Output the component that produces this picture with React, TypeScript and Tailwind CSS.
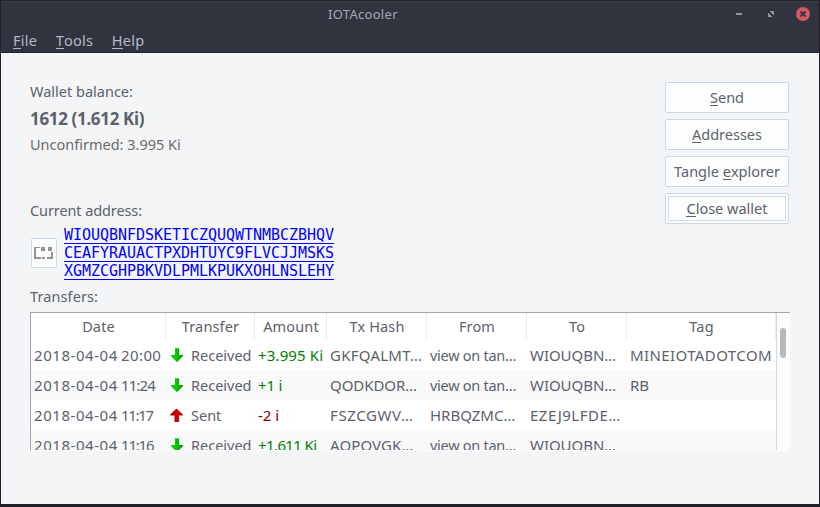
import React from "react";

const SANS = "font-['Noto_Sans',sans-serif]";

function Mnemonic({ before = "", letter, after }: { before?: string; letter: string; after: string }) {
  return (
    <span className="flex whitespace-pre">
      {before}
      <span className="h-[17px] border-b border-current">{letter}</span>
      {after}
    </span>
  );
}

function TitleBar() {
  return (
    <div className="relative flex h-[26px] border-t border-[#3c404b] text-[13px] text-[#a3a8b6]">
      <span className="pl-[327px] tracking-[0.3px] leading-[24px]">IOTAcooler</span>
      <svg className="absolute right-[6px] top-[2px]" width="78" height="18" viewBox="0 0 78 18" shapeRendering="crispEdges">
        <rect x="1" y="9" width="6" height="2" fill="#9297a3" />
        <path d="M35 7h4v4h-1v-1h-1v-1h-1v-1h-1zM33 9h1v1h1v1h1v1h1v1h-4z" fill="#9297a3" />
        <circle cx="68" cy="10" r="7" fill="#d35860" shapeRendering="geometricPrecision" />
        <path d="M65.5 7.5l5 5m0-5l-5 5" stroke="#31343f" strokeWidth="1.8" shapeRendering="geometricPrecision" />
      </svg>
    </div>
  );
}

function MenuBar() {
  return (
    <div className="flex h-[26px] gap-[18.5px] border-b border-[#23222d] pl-3 pt-[5px] text-[14.5px] leading-[17px] tracking-[0.25px] text-[#b3b9c7]">
      <Mnemonic letter="F" after="ile" />
      <Mnemonic letter="T" after="ools" />
      <Mnemonic letter="H" after="elp" />
    </div>
  );
}

function Button({ children, focused = false }: { children: React.ReactNode; focused?: boolean }) {
  return (
    <button className="h-[31px] w-[124px] rounded-[2px] border border-[#cdd5e8] bg-[#fcfdfd] p-[2px] text-[14.5px] leading-[17px] tracking-normal">
      <span className={`flex h-full items-center justify-center border ${focused ? "border-[#d5d9ea]" : "border-transparent"}`}>
        {children}
      </span>
    </button>
  );
}

function Arrow({ up = false }: { up?: boolean }) {
  return (
    <svg className="ml-[4px] mr-[7px] shrink-0" width="14" height="16" viewBox="0 0 14 16">
      <defs>
        <linearGradient id="received" x1="0" x2="1"><stop offset="0" stopColor="#00e000" /><stop offset="0.5" stopColor="#00c400" /><stop offset="1" stopColor="#009800" /></linearGradient>
        <linearGradient id="sent" x1="0" x2="1"><stop offset="0" stopColor="#a00000" /><stop offset="0.6" stopColor="#d00000" /><stop offset="1" stopColor="#b00000" /></linearGradient>
      </defs>
      {up ? (
        <path d="M6.5 0.500l6.500 6.200-.5.8H9V14H4.500V7.500H.6L0 6.700z" fill="url(#sent)" />
      ) : (
        <path d="M5 0.300h4v6.700h3.800l.5.700L7 14.200.7 7.700l.5-.7H5z" fill="url(#received)" />
      )}
    </svg>
  );
}

const GRID = "grid grid-cols-[135px_89px_72px_100px_100px_100px_149px]";

const headings = ["Date", "Transfer", "Amount", "Tx Hash", "From", "To", "Tag"];

type Cell = [text: string, style: string];

interface Row {
  time: Cell;
  sent: boolean;
  amount: Cell;
  hash: Cell;
  from: Cell;
  to: Cell;
  tag: Cell;
}

const rows: Row[] = [
  {
    time: ["20:00", "tracking-[0.4px]"],
    sent: false,
    amount: ["+3.995 Ki", "tracking-[0.15px]"],
    hash: ["GKFQALMT…", "tracking-[0.25px]"],
    from: ["view on tan…", "text-[14.5px] tracking-[-0.27px]"],
    to: ["WIOUQBN…", "tracking-[-0.05px]"],
    tag: ["MINEIOTADOTCOM", "tracking-[0.4px]"],
  },
  {
    time: ["11:24", "tracking-[-0.9px]"],
    sent: false,
    amount: ["+1 i", "tracking-[-0.2px]"],
    hash: ["QODKDOR…", "tracking-[-0.05px]"],
    from: ["view on tan…", "text-[14.5px] tracking-[-0.27px]"],
    to: ["WIOUQBN…", "tracking-[-0.05px]"],
    tag: ["RB", "tracking-normal"],
  },
  {
    time: ["11:17", "tracking-[-1.3px]"],
    sent: true,
    amount: ["-2 i", "tracking-normal"],
    hash: ["FSZCGWV…", "tracking-[0.6px]"],
    from: ["HRBQZMC…", "tracking-normal"],
    to: ["EZEJ9LFDE…", "tracking-[0.5px]"],
    tag: ["", "tracking-normal"],
  },
  {
    time: ["11:16", "tracking-[-1.2px]"],
    sent: false,
    amount: ["+1.611 Ki", "tracking-[-0.6px]"],
    hash: ["AOPOVGK…", "tracking-[0.1px]"],
    from: ["view on tan…", "text-[14.5px] tracking-[-0.27px]"],
    to: ["WIOUQBN…", "tracking-[-0.05px]"],
    tag: ["", "tracking-normal"],
  },
];

function TextCell({ cell, color = "" }: { cell: Cell; color?: string }) {
  return <div className={`pl-[3px] ${cell[1]} ${color}`}>{cell[0]}</div>;
}

function Transfers() {
  return (
    <div className="mt-[5px] flex h-[139px] w-[760px] overflow-hidden border-b border-l border-t border-[#a2a6ae] border-b-[#fdfdfd] bg-white text-[15px]">
      <div className="w-[745px] shrink-0">
        <div className={`${GRID} h-[27px] text-[14.5px] leading-[27px] tracking-[0.15px]`}>
          {headings.map((h) => (
            <div key={h} className="border-r border-[#ececef] pl-px text-center">{h}</div>
          ))}
        </div>
        {rows.map((r, i) => (
          <div key={r.time[0]} className={`${GRID} h-[30px] whitespace-nowrap leading-[31px] ${i % 2 ? "bg-[#f9f9f9]" : "bg-white"}`}>
            <div className="flex pl-[3px]">
              <span className="w-[87px] tracking-[0.55px]">2018-04-04</span>
              <span className={r.time[1]}>{r.time[0]}</span>
            </div>
            <div className="flex items-center text-[14.5px]"><Arrow up={r.sent} />{r.sent ? "Sent" : "Received"}</div>
            <TextCell cell={r.amount} color={r.sent ? "text-[#800000]" : "text-[#008000]"} />
            <TextCell cell={r.hash} />
            <TextCell cell={r.from} />
            <TextCell cell={r.to} />
            <TextCell cell={r.tag} />
          </div>
        ))}
      </div>
      <div className="flex-1 border-l border-[#d4d6da] bg-[#fcfcfc] pl-[3px] pt-[15px]">
        <div className="h-[30px] w-[6px] rounded-full bg-[#b8b9be]" />
      </div>
    </div>
  );
}

export default function App() {
  return (
    <div className={`h-[507px] w-[820px] overflow-hidden border border-b-[3px] border-[#20212b] bg-[#f4f5f7] text-[#5c616c] ${SANS}`}>
      <div className="bg-[#31343f]">
        <TitleBar />
        <MenuBar />
      </div>
      <div className="pl-[29px]">
        <div className="flex h-[172px] justify-between pr-[30px]">
          <div className="text-[14.5px]">
            <div className="mt-[29px] h-5 leading-[18px]">Wallet balance:</div>
            <div className="mt-[5px] h-6 text-[17px] font-bold leading-6 tracking-[-0.34px]">1612 (1.612 Ki)</div>
            <div className="mt-[4px] h-5 leading-[18px] text-[#6b6b6b]">Unconfirmed: 3.995 Ki</div>
            <div className="mt-[46px] h-5 leading-[18px] tracking-[-0.1px]">Current address:</div>
          </div>
          <div className="mt-[29px] flex flex-col gap-[6px]">
            <Button><Mnemonic letter="S" after="end" /></Button>
            <Button><Mnemonic letter="A" after="ddresses" /></Button>
            <Button><Mnemonic before="Tangle " letter="e" after="xplorer" /></Button>
            <Button focused><Mnemonic letter="C" after="lose wallet" /></Button>
          </div>
        </div>
        <div className="flex h-[62px]">
          <button className="ml-px mt-[13px] flex h-[30px] w-[26px] items-center justify-center rounded-[2px] border border-[#cdd5e8] bg-[#fcfdfd]">
            <svg className="shrink-0" width="20" height="14" viewBox="0 0 20 14" shapeRendering="crispEdges" fill="#949494">
              <path d="M0 1h6v1H2v9h5v2H0zM7 1h4v4H7zM14 1h4v4h-4zM17 6h2v7h-6v-2h4zM8 11h3v2H8z" />
            </svg>
          </button>
          <div className="ml-[7px] mt-px font-['DejaVu_Sans_Mono',monospace] text-[15px] leading-[19px] tracking-[-0.03px] text-[#0000ff]">
            {["WIOUQBNFDSKETICZQUQWTNMBCZBHQV", "CEAFYRAUACTPXDHTUYC9FLVCJJMSKS", "XGMZCGHPBKVDLPMLKPUKXOHLNSLEHY"].map((line) => (
              <div key={line} className="h-[18px] w-[270px] border-b border-[#0000ff]">{line}</div>
            ))}
          </div>
        </div>
        <div className="h-5 text-[14.5px] leading-[18px] tracking-[0.1px]">Transfers:</div>
        <Transfers />
      </div>
    </div>
  );
}
